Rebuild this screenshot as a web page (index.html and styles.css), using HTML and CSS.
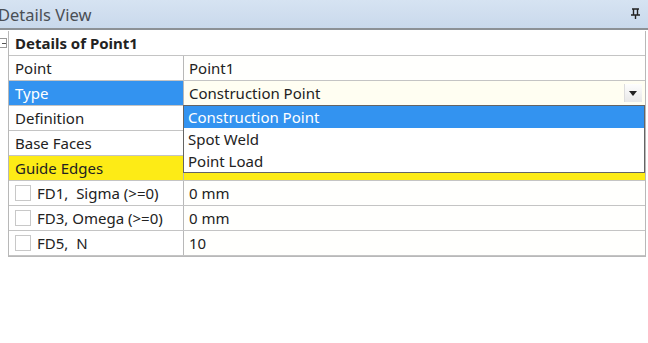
FILE: index.html
```html
<!DOCTYPE html>
<html lang="en">
<head>
  <meta charset="UTF-8">
  <title>Details View</title>
  <link rel="stylesheet" href="styles.css">
</head>
<body>
  <div class="titleBar">
    <span class="titleText">Details View</span>
    <svg class="pin" width="9" height="11" viewBox="0 0 9 11">
      <path d="M1 1h7M2.5 1v6M6.5 1v6M0 7h9M4.5 7v4" stroke="#222" stroke-width="1.4" fill="none"/>
    </svg>
  </div>

  <div class="panel">
    <span class="toggle"></span>
    <div class="grid">
      <div class="row head">Details of Point1</div>
      <div class="row">
        <div class="name">Point</div>
        <div class="value">Point1</div>
      </div>
      <div class="row">
        <div class="name selected">Type</div>
        <div class="value combo">
          Construction Point
          <span class="arrow"></span>
        </div>
      </div>
      <div class="row">
        <div class="name">Definition</div>
        <div class="value"></div>
      </div>
      <div class="row">
        <div class="name">Base Faces</div>
        <div class="value"></div>
      </div>
      <div class="row yellow">
        <div class="name">Guide Edges</div>
        <div class="value"></div>
      </div>
      <div class="row">
        <div class="name"><span class="check"></span>FD1,&nbsp; Sigma (&gt;=0)</div>
        <div class="value">0 mm</div>
      </div>
      <div class="row">
        <div class="name"><span class="check"></span>FD3, Omega (&gt;=0)</div>
        <div class="value">0 mm</div>
      </div>
      <div class="row">
        <div class="name"><span class="check"></span>FD5,&nbsp; N</div>
        <div class="value">10</div>
      </div>

      <!-- open list of the Type combo box -->
      <ul class="dropList">
        <li class="active">Construction Point</li>
        <li>Spot Weld</li>
        <li>Point Load</li>
      </ul>
    </div>
  </div>
</body>
</html>
```

FILE: styles.css
```css
body {
  margin: 0;
  background: #fff;
  font-family: "Noto Sans", "Open Sans", sans-serif;
  font-size: 15px;
  color: #222;
}

.titleBar {
  height: 28px;
  display: flex;
  align-items: center;
  justify-content: space-between;
  padding: 0 8px 0 0;
  background: linear-gradient(#d6e3f2, #c9d9ec);
  border-bottom: 2px solid #8c9196;
}
.titleText {
  margin-left: -2px;
  font-size: 16.5px;
  color: #4a4f55;
}
.pin {
  margin-top: -2px;
}

.panel {
  position: relative;
  padding: 1px 2px 0 8px;
}
.toggle {
  position: absolute;
  left: -3px;
  top: 8px;
  width: 8px;
  height: 8px;
  border: 1px solid #999;
  background: #fff;
}
.toggle::after {
  content: "";
  position: absolute;
  left: 4px;
  top: 4px;
  width: 4px;
  height: 1px;
  background: #555;
}

.grid {
  position: relative;
  border-left: 1px solid #b8b8b8;
  border-right: 1px solid #b8b8b8;
  border-bottom: 1px solid #b8b8b8;
}

.row {
  display: flex;
  height: 24px;
  border-bottom: 1px solid #c4c4c4;
}
.row.head {
  align-items: center;
  padding-left: 6px;
  font-weight: bold;
}
.name {
  flex: none;
  width: 168px;
  display: flex;
  align-items: center;
  padding-left: 6px;
  border-right: 1px solid #b8b8b8;
  white-space: nowrap;
}
.value {
  flex: 1;
  display: flex;
  align-items: center;
  padding-left: 5px;
  background: #fffffd;
}
.selected {
  background: #3393f0;
  color: #fff;
}
.yellow .name,
.yellow .value {
  background: #fdeb16;
}

.combo {
  position: relative;
  background: #fffef2;
}
.arrow {
  position: absolute;
  right: 3px;
  top: 3px;
  width: 17px;
  height: 18px;
  background: linear-gradient(#fdfdfd, #e8e8e8);
  border-left: 1px solid #ddd;
}
.arrow::after {
  content: "";
  position: absolute;
  left: 4px;
  top: 7px;
  border-left: 4px solid transparent;
  border-right: 4px solid transparent;
  border-top: 5px solid #222;
}

.check {
  flex: none;
  width: 14px;
  height: 14px;
  margin-right: 6px;
  border: 1px solid #c8c8c8;
  background: #fff;
}

.dropList {
  position: absolute;
  left: 174px;
  right: 0;
  top: 74px;
  margin: 0;
  padding: 0;
  list-style: none;
  background: #fff;
  border: 1px solid #646464;
}
.dropList li {
  height: 22px;
  line-height: 22px;
  padding-left: 4px;
}
.dropList li.active {
  background: #3393f0;
  color: #fff;
}
```
